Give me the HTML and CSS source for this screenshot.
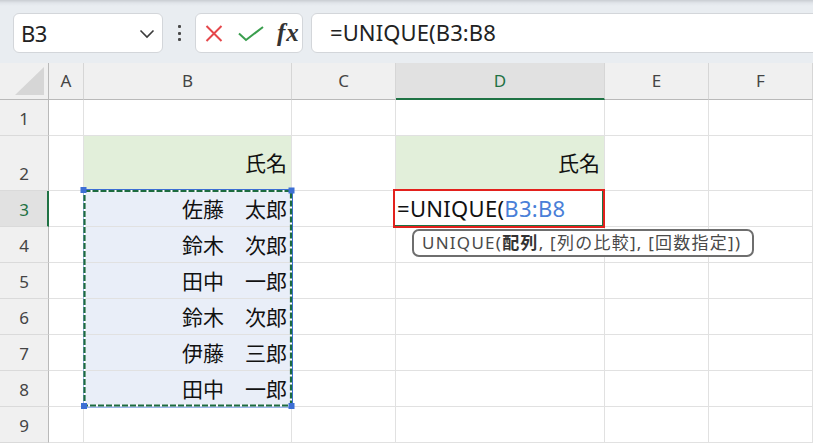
FILE: index.html
```html
<!DOCTYPE html>
<html lang="ja">
<head>
<meta charset="utf-8">
<title>UNIQUE</title>
<link rel="stylesheet" href="styles.css">
</head>
<body>
<div class="app">
  <div class="toolbar">
    <div class="namebox">
      <span class="nb-text">B3</span>
      <svg class="chev" width="16" height="10" viewBox="0 0 16 10"><path d="M1.5 1.5 L8 8 L14.5 1.5" fill="none" stroke="#3a3a3a" stroke-width="1.6"/></svg>
    </div>
    <div class="dots"><i></i><i></i><i></i></div>
    <div class="btns">
      <svg width="18" height="17" viewBox="0 0 18 17"><path d="M1.5 1 L16.5 16 M16.5 1 L1.5 16" fill="none" stroke="#e5474b" stroke-width="2"/></svg>
      <svg width="26" height="16" viewBox="0 0 26 16"><path d="M1 7.5 L8 14 L25 1" fill="none" stroke="#3a9e4e" stroke-width="2"/></svg>
      <span class="fx">fx</span>
    </div>
    <div class="formula">=UNIQUE(B3:B8</div>
  </div>
  <div class="sheet">
    <div class="corner"><svg width="30" height="28" viewBox="0 0 30 28"><path d="M29 0 L29 28 L0 28 Z" fill="#d6d6d6"/></svg></div>
    <div class="ch">A</div>
    <div class="ch">B</div>
    <div class="ch">C</div>
    <div class="ch sel">D</div>
    <div class="ch">E</div>
    <div class="ch">F</div>

    <div class="rh">1</div><div class="c"></div><div class="c"></div><div class="c"></div><div class="c"></div><div class="c"></div><div class="c"></div>

    <div class="rh">2</div><div class="c"></div><div class="c hdr">氏名</div><div class="c"></div><div class="c hdr">氏名</div><div class="c"></div><div class="c"></div>

    <div class="rh sel">3</div><div class="c"></div><div class="c nm">佐藤　太郎</div><div class="c"></div><div class="c"></div><div class="c"></div><div class="c"></div>

    <div class="rh">4</div><div class="c"></div><div class="c nm">鈴木　次郎</div><div class="c"></div><div class="c"></div><div class="c"></div><div class="c"></div>

    <div class="rh">5</div><div class="c"></div><div class="c nm">田中　一郎</div><div class="c"></div><div class="c"></div><div class="c"></div><div class="c"></div>

    <div class="rh">6</div><div class="c"></div><div class="c nm">鈴木　次郎</div><div class="c"></div><div class="c"></div><div class="c"></div><div class="c"></div>

    <div class="rh">7</div><div class="c"></div><div class="c nm">伊藤　三郎</div><div class="c"></div><div class="c"></div><div class="c"></div><div class="c"></div>

    <div class="rh">8</div><div class="c"></div><div class="c nm">田中　一郎</div><div class="c"></div><div class="c"></div><div class="c"></div><div class="c"></div>

    <div class="rh">9</div><div class="c"></div><div class="c"></div><div class="c"></div><div class="c"></div><div class="c"></div><div class="c"></div>

    <div class="range">
      <svg class="range-svg" width="214" height="222" viewBox="0 0 214 222">
        <rect x="1.5" y="1.5" width="209" height="217.5" fill="none" stroke="#3d6fd4" stroke-width="1"/>
        <rect x="2.5" y="3" width="206.5" height="214.5" fill="none" stroke="#ffffff" stroke-width="2"/>
        <rect x="2.5" y="3" width="206.5" height="214.5" fill="none" stroke="#1d6b40" stroke-width="2.2" stroke-dasharray="6 2"/>
        <rect x="-1.5" y="-1" width="6" height="6" fill="#3d6fd4"/>
        <rect x="206.5" y="-0.5" width="6" height="6" fill="#3d6fd4"/>
        <rect x="-1" y="215" width="6" height="6" fill="#3d6fd4"/>
        <rect x="206.5" y="215" width="6" height="6" fill="#3d6fd4"/>
      </svg>
    </div>

    <div class="editor">
      <div class="edit-box"><span class="fn">=UNIQUE(</span><span class="ref">B3:B8</span></div>
      <div class="tip">UNIQUE(<b>配列</b>, [列の比較], [回数指定])</div>
    </div>
  </div>
</div>
</body>
</html>
```

FILE: styles.css
```css
* { box-sizing: border-box; }
html, body { margin: 0; padding: 0; }
body {
  width: 813px;
  height: 443px;
  overflow: hidden;
  background: #ffffff;
  font-family: "Noto Sans", "Noto Sans CJK JP", sans-serif;
  color: #222;
}
.app { width: 813px; height: 443px; overflow: hidden; }

.toolbar {
  height: 63px;
  display: flex;
  align-items: flex-start;
  padding: 13px 0 0 13px;
  background: linear-gradient(to bottom, #c9cdd2 0px, #e1e5ea 3px, #e9edf1 6px, #e9edf1 100%);
  overflow: hidden;
}
.namebox {
  flex: 0 0 150px;
  height: 40px;
  background: #fff;
  border: 1px solid #d3d6da;
  border-radius: 6px;
  display: flex;
  align-items: center;
  justify-content: space-between;
  padding: 0 7px 0 7px;
}
.nb-text { font-size: 22px; color: #222; letter-spacing: -0.5px; }
.chev { margin-top: 1px; }
.dots {
  flex: 0 0 32px;
  height: 40px;
  display: flex;
  flex-direction: column;
  align-items: center;
  justify-content: center;
  gap: 3.5px;
}
.dots i { display: block; width: 3px; height: 3px; background: #4a4a4a; border-radius: 1px; }
.btns {
  flex: 0 0 108px;
  height: 40px;
  background: #fff;
  border: 1px solid #d3d6da;
  border-radius: 6px;
  display: flex;
  align-items: center;
  padding: 0 0 0 9px;
}
.btns svg:first-child { margin-right: 15px; }
.btns svg:nth-child(2) { margin-right: 13px; margin-top: 1px; }
.fx {
  font-family: "Liberation Serif", "DejaVu Serif", serif;
  font-style: italic;
  font-weight: bold;
  font-size: 25px;
  color: #333;
  line-height: 1;
  margin-top: -2px;
  letter-spacing: 1px;
}
.formula {
  flex: 0 0 520px;
  margin-left: 8px;
  height: 40px;
  background: #fff;
  border: 1px solid #d3d6da;
  border-radius: 6px;
  font-size: 22px;
  line-height: 37px;
  padding-left: 18px;
  color: #222;
  letter-spacing: 0.1px;
}

.sheet {
  position: relative;
  display: grid;
  grid-template-columns: 49px 35px 208px 104px 209px 104px 104px;
  grid-template-rows: 37px 36px 55px repeat(7, 36px);
}
.corner {
  background: #f0f0f0;
  border-right: 1px solid #b9b9b9;
  border-bottom: 1px solid #b9b9b9;
  display: flex;
  justify-content: flex-end;
  align-items: flex-end;
  padding: 0 3px 4px 0;
}
.ch {
  background: #f0f0f0;
  border-right: 1px solid #d6d6d6;
  border-bottom: 1px solid #b9b9b9;
  font-size: 17px;
  color: #444;
  display: flex;
  justify-content: center;
  align-items: center;
  padding-bottom: 2px;
}
.ch.sel {
  background: #e1e1e1;
  color: #1f7244;
  border-bottom: 2px solid #1f7244;
  padding-bottom: 1px;
}
.rh {
  background: #f0f0f0;
  border-right: 1px solid #b9b9b9;
  border-bottom: 1px solid #dadada;
  font-size: 17px;
  color: #444;
  display: flex;
  justify-content: center;
  align-items: flex-end;
  line-height: 1;
  padding-bottom: 8px;
}
.rh.sel {
  background: #e1e1e1;
  color: #1f7244;
  border-right: 2px solid #1f7244;
  padding-left: 1px;
}
.c {
  border-right: 1px solid #e1e1e1;
  border-bottom: 1px solid #e1e1e1;
  font-family: "Noto Sans CJK JP", sans-serif;
  font-size: 21px;
  display: flex;
  align-items: center;
  justify-content: flex-end;
  padding-right: 4px;
  color: #111;
  white-space: nowrap;
}
.c.hdr { background: #e2efda; padding-bottom: 2px; }
.c.nm { background: #e9eef8; padding-bottom: 1px; }

.range {
  position: absolute;
  grid-column: 3 / 4;
  grid-row: 4 / 10;
  top: 0;
  left: 0;
  right: 0;
  bottom: 0;
  pointer-events: none;
}
.range-svg {
  position: absolute;
  left: -2px;
  top: -3px;
  overflow: visible;
}

.editor {
  position: absolute;
  grid-column: 5 / 6;
  grid-row: 4 / 5;
  top: 0;
  left: 0;
  right: 0;
  bottom: 0;
}
.edit-box {
  position: absolute;
  left: -3px;
  top: -2px;
  width: 212px;
  height: 39px;
  border: 2px solid #e3211d;
  background: #fff;
  box-shadow: inset -1px -1px 0 #1f7244;
  font-size: 22px;
  line-height: 34px;
  padding-left: 2px;
  letter-spacing: 0.3px;
  white-space: nowrap;
}
.fn { color: #111; }
.ref { color: #4a7fd8; }
.tip {
  position: absolute;
  left: 16px;
  top: 38px;
  width: 342px;
  height: 28px;
  background: #fff;
  border: 2px solid #6e6e6e;
  border-radius: 7px;
  font-size: 17px;
  line-height: 23px;
  padding-left: 8px;
  letter-spacing: 1.25px;
  color: #4a4a4a;
  white-space: nowrap;
  font-family: "Noto Sans", "Noto Sans CJK JP", sans-serif;
}
.tip b { color: #333; font-weight: 700; }
```
